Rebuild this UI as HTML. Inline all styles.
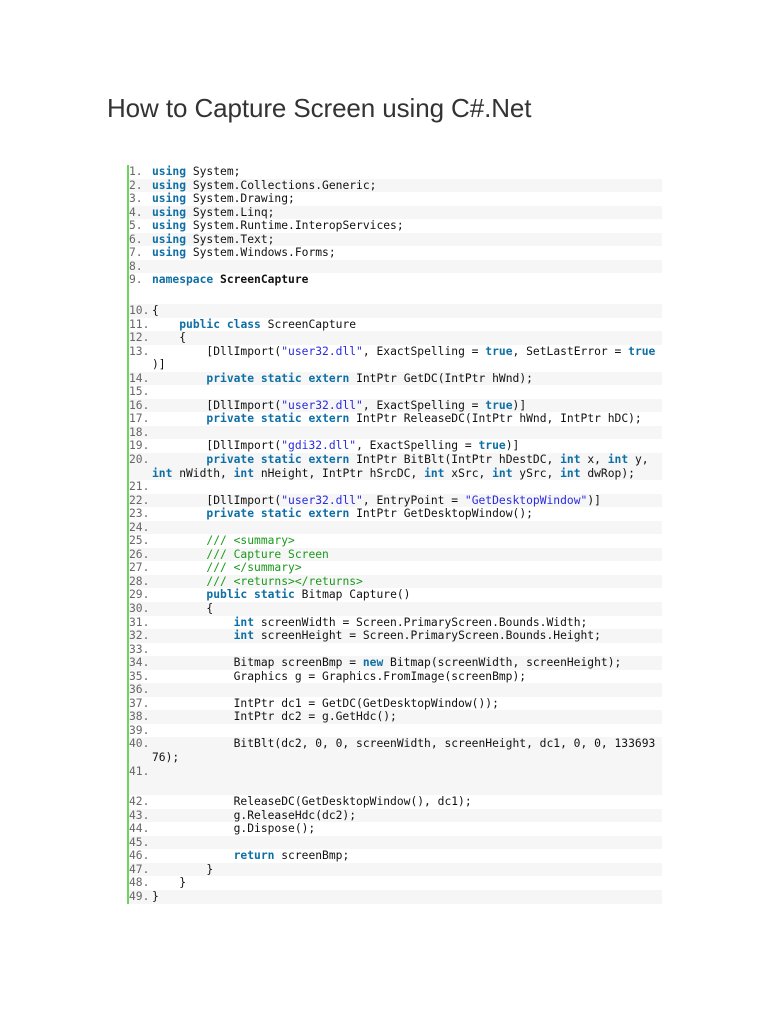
<!DOCTYPE html>
<html><head><meta charset="utf-8"><style>
body{margin:0;background:#fff;width:768px;height:1024px;position:relative;overflow:hidden}
h1{position:absolute;left:107px;top:93px;margin:0;font:26px "Liberation Sans",sans-serif;color:#333;font-weight:normal;letter-spacing:-0.1px}
#code{position:absolute;left:127px;top:165px;width:533px;border-left:2px solid #6ad65a;font-family:"DejaVu Sans Mono",monospace;font-size:11.3px;color:#111}
.r{display:flex;line-height:13.55px;min-height:13.55px}
.r.e{background:#f6f6f6}
.n{width:23px;flex:none;color:#666;white-space:pre}
.c{white-space:pre}
.k{color:#0e6fa6;font-weight:bold}
.s{color:#2a2ae0}
.m{color:#1a9a1a}
</style></head><body>
<h1>How to Capture Screen using C#.Net</h1>
<div id="code">
<div class="r"><span class="n">1.</span><span class="c"><span class="k">using</span> System;</span></div>
<div class="r e"><span class="n">2.</span><span class="c"><span class="k">using</span> System.Collections.Generic;</span></div>
<div class="r"><span class="n">3.</span><span class="c"><span class="k">using</span> System.Drawing;</span></div>
<div class="r e"><span class="n">4.</span><span class="c"><span class="k">using</span> System.Linq;</span></div>
<div class="r"><span class="n">5.</span><span class="c"><span class="k">using</span> System.Runtime.InteropServices;</span></div>
<div class="r e"><span class="n">6.</span><span class="c"><span class="k">using</span> System.Text;</span></div>
<div class="r"><span class="n">7.</span><span class="c"><span class="k">using</span> System.Windows.Forms;</span></div>
<div class="r e"><span class="n">8.</span><span class="c"></span></div>
<div class="r" style="height:30.6px"><span class="n">9.</span><span class="c"><span class="k">namespace</span> <b>ScreenCapture</b></span></div>
<div class="r e"><span class="n">10.</span><span class="c">{</span></div>
<div class="r"><span class="n">11.</span><span class="c">    <span class="k">public</span> <span class="k">class</span> ScreenCapture</span></div>
<div class="r e"><span class="n">12.</span><span class="c">    {</span></div>
<div class="r"><span class="n">13.</span><span class="c">        [DllImport(<span class="s">"user32.dll"</span>, ExactSpelling = <span class="k">true</span>, SetLastError = <span class="k">true</span>
)]</span></div>
<div class="r e"><span class="n">14.</span><span class="c">        <span class="k">private</span> <span class="k">static</span> <span class="k">extern</span> IntPtr GetDC(IntPtr hWnd);</span></div>
<div class="r"><span class="n">15.</span><span class="c"></span></div>
<div class="r e"><span class="n">16.</span><span class="c">        [DllImport(<span class="s">"user32.dll"</span>, ExactSpelling = <span class="k">true</span>)]</span></div>
<div class="r"><span class="n">17.</span><span class="c">        <span class="k">private</span> <span class="k">static</span> <span class="k">extern</span> IntPtr ReleaseDC(IntPtr hWnd, IntPtr hDC);</span></div>
<div class="r e"><span class="n">18.</span><span class="c"></span></div>
<div class="r"><span class="n">19.</span><span class="c">        [DllImport(<span class="s">"gdi32.dll"</span>, ExactSpelling = <span class="k">true</span>)]</span></div>
<div class="r e"><span class="n">20.</span><span class="c">        <span class="k">private</span> <span class="k">static</span> <span class="k">extern</span> IntPtr BitBlt(IntPtr hDestDC, <span class="k">int</span> x, <span class="k">int</span> y,
<span class="k">int</span> nWidth, <span class="k">int</span> nHeight, IntPtr hSrcDC, <span class="k">int</span> xSrc, <span class="k">int</span> ySrc, <span class="k">int</span> dwRop);</span></div>
<div class="r"><span class="n">21.</span><span class="c"></span></div>
<div class="r e"><span class="n">22.</span><span class="c">        [DllImport(<span class="s">"user32.dll"</span>, EntryPoint = <span class="s">"GetDesktopWindow"</span>)]</span></div>
<div class="r"><span class="n">23.</span><span class="c">        <span class="k">private</span> <span class="k">static</span> <span class="k">extern</span> IntPtr GetDesktopWindow();</span></div>
<div class="r e"><span class="n">24.</span><span class="c"></span></div>
<div class="r"><span class="n">25.</span><span class="c">        <span class="m">/// &lt;summary&gt;</span></span></div>
<div class="r e"><span class="n">26.</span><span class="c">        <span class="m">/// Capture Screen</span></span></div>
<div class="r"><span class="n">27.</span><span class="c">        <span class="m">/// &lt;/summary&gt;</span></span></div>
<div class="r e"><span class="n">28.</span><span class="c">        <span class="m">/// &lt;returns&gt;&lt;/returns&gt;</span></span></div>
<div class="r"><span class="n">29.</span><span class="c">        <span class="k">public</span> <span class="k">static</span> Bitmap Capture()</span></div>
<div class="r e"><span class="n">30.</span><span class="c">        {</span></div>
<div class="r"><span class="n">31.</span><span class="c">            <span class="k">int</span> screenWidth = Screen.PrimaryScreen.Bounds.Width;</span></div>
<div class="r e"><span class="n">32.</span><span class="c">            <span class="k">int</span> screenHeight = Screen.PrimaryScreen.Bounds.Height;</span></div>
<div class="r"><span class="n">33.</span><span class="c"></span></div>
<div class="r e"><span class="n">34.</span><span class="c">            Bitmap screenBmp = <span class="k">new</span> Bitmap(screenWidth, screenHeight);</span></div>
<div class="r"><span class="n">35.</span><span class="c">            Graphics g = Graphics.FromImage(screenBmp);</span></div>
<div class="r e"><span class="n">36.</span><span class="c"></span></div>
<div class="r"><span class="n">37.</span><span class="c">            IntPtr dc1 = GetDC(GetDesktopWindow());</span></div>
<div class="r e"><span class="n">38.</span><span class="c">            IntPtr dc2 = g.GetHdc();</span></div>
<div class="r"><span class="n">39.</span><span class="c"></span></div>
<div class="r e"><span class="n">40.</span><span class="c">            BitBlt(dc2, 0, 0, screenWidth, screenHeight, dc1, 0, 0, 133693
76);</span></div>
<div class="r e" style="height:30.6px"><span class="n">41.</span><span class="c"></span></div>
<div class="r"><span class="n">42.</span><span class="c">            ReleaseDC(GetDesktopWindow(), dc1);</span></div>
<div class="r e"><span class="n">43.</span><span class="c">            g.ReleaseHdc(dc2);</span></div>
<div class="r"><span class="n">44.</span><span class="c">            g.Dispose();</span></div>
<div class="r e"><span class="n">45.</span><span class="c"></span></div>
<div class="r"><span class="n">46.</span><span class="c">            <span class="k">return</span> screenBmp;</span></div>
<div class="r e"><span class="n">47.</span><span class="c">        }</span></div>
<div class="r"><span class="n">48.</span><span class="c">    }</span></div>
<div class="r e"><span class="n">49.</span><span class="c">}</span></div>
</div>
</body></html>
